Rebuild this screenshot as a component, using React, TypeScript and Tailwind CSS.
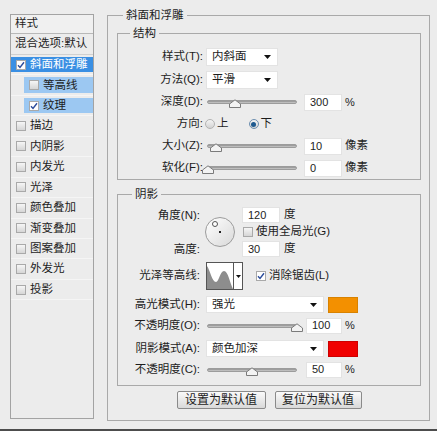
import React from 'react';

type Effect = { name: string; checked?: boolean; selected?: boolean; sub?: boolean };

const effects: Effect[] = [
  { name: '斜面和浮雕', checked: true, selected: true },
  { name: '等高线', sub: true },
  { name: '纹理', sub: true, checked: true },
  { name: '描边' },
  { name: '内阴影' },
  { name: '内发光' },
  { name: '光泽' },
  { name: '颜色叠加' },
  { name: '渐变叠加' },
  { name: '图案叠加' },
  { name: '外发光' },
  { name: '投影' },
];

const Check = ({ checked, white }: { checked?: boolean; white?: boolean }) => (
  <span
    className={`w-[10px] h-[10px] shrink-0 border border-[#a9a9a9] flex items-center justify-center ${
      white ? 'bg-white' : 'bg-gradient-to-b from-[#f6f6f6] to-[#d6d6d6]'
    }`}
  >
    {checked && (
      <svg width="8" height="8" viewBox="0 0 8 8">
        <path d="M1 4.2 L3 6.4 L7 1.2" stroke="#2b4c9b" strokeWidth="1.4" fill="none" />
      </svg>
    )}
  </span>
);

const Radio = ({ on }: { on?: boolean }) => (
  <span
    className={`w-[10px] h-[10px] rounded-full border flex items-center justify-center bg-gradient-to-b from-[#f4f4f4] to-[#d3d3d3] ${
      on ? 'border-[#6d8fb0]' : 'border-[#b3b3b3]'
    }`}
  >
    {on && <span className="w-[5px] h-[5px] rounded-full bg-[#1d5a90]" />}
  </span>
);

const Arrow = () => (
  <svg width="7" height="4" viewBox="0 0 7 4">
    <path d="M0 0 H7 L3.5 4 Z" fill="#111" />
  </svg>
);

// thumb position comes from the value fraction
const Slider = ({ pos }: { pos: number }) => (
  <div className="relative w-[90px] h-[16px] shrink-0">
    <div className="absolute left-0 right-0 top-[6px] h-[4px] rounded-full border border-[#9c9c9c] bg-gradient-to-b from-[#8f8f8f] to-[#cdcdcd]" />
    <svg className="absolute top-[5px]" style={{ left: pos * 90 - 6 }} width="12" height="9" viewBox="0 0 12 9">
      <path d="M0.5 8.5 V5 L6 0.8 L11.5 5 V8.5 Z" fill="#f3f3f3" stroke="#7b7b7b" />
    </svg>
  </div>
);

const Field = ({ value, className = '' }: { value: string; className?: string }) => (
  <div className={`bg-white border border-[#e3e3e3] flex items-center pl-[5px] text-[11px] ${className}`}>{value}</div>
);

const Select = ({ value, className = '' }: { value: string; className?: string }) => (
  <div className={`bg-white border border-[#e3e3e3] flex items-center justify-between pl-[5px] pr-[6px] ${className}`}>
    <span>{value}</span>
    <Arrow />
  </div>
);

const App: React.FC = () => {
  return (
    <div className="w-[437px] h-[431px] bg-[#ececec] text-[#1d1d1d] text-[11.5px] font-['Liberation_Sans','Noto_Sans_CJK_SC',sans-serif] flex flex-col">
      <div className="h-[429px] flex items-start pl-[10px]">
        {/* left list */}
        <div className="mt-[14px] w-[84px] h-[405px] border border-[#a3a3a3] flex flex-col">
          <div className="h-[19px] flex items-center pl-[4px] border-b border-[#b8b8b8] bg-[#f0f0f0]">样式</div>
          <div className="h-[21px] flex items-center pl-[4px] border-b border-[#d0d0d0]">混合选项:默认</div>
          {effects.map((e) => (
            <div key={e.name} className={`h-[20.45px] py-[2px] border-b border-[#f5f5f5] ${e.sub ? 'pl-[13px]' : ''}`}>
              <div
                className={`h-full flex items-center gap-[4px] pl-[5px] ${
                  e.selected ? 'bg-[#3a8fe3] text-white' : e.sub ? 'bg-[#9cc8f2]' : ''
                }`}
              >
                <Check checked={e.checked} white={e.selected || (e.sub && e.checked)} />
                <span>{e.name}</span>
              </div>
            </div>
          ))}
        </div>

        {/* right settings */}
        <fieldset className="mt-[9px] ml-[13px] w-[323px] h-[412px] border border-[#a9a9a9] p-0">
          <legend className="ml-[15px] px-[3px] leading-[12px] text-[11.5px]">斜面和浮雕</legend>
          <div className="pl-[9px] pr-[8px] pt-[6px] flex flex-col">
            <fieldset className="border border-[#a9a9a9] p-0">
              <legend className="ml-[12px] px-[3px] leading-[12px]">结构</legend>
              <div className="pt-[9px] pb-[2px] flex flex-col">
                <div className="h-[18px] flex items-center">
                  <span className="w-[85px] text-right">样式(T):</span>
                  <Select value="内斜面" className="ml-[3px] w-[72px] h-[18px]" />
                </div>
                <div className="mt-[5px] h-[18px] flex items-center">
                  <span className="w-[85px] text-right">方法(Q):</span>
                  <Select value="平滑" className="ml-[3px] w-[72px] h-[18px]" />
                </div>
                <div className="mt-[4px] h-[18px] flex items-center">
                  <span className="w-[85px] text-right">深度(D):</span>
                  <div className="ml-[4px]"><Slider pos={0.31} /></div>
                  <Field value="300" className="ml-[7px] w-[38px] h-[17px]" />
                  <span className="ml-[3px] text-[11px]">%</span>
                </div>
                <div className="mt-[4px] h-[18px] flex items-center">
                  <span className="w-[85px] text-right">方向:</span>
                  <span className="ml-[2px]"><Radio /></span>
                  <span className="ml-[2px]">上</span>
                  <span className="ml-[20px]"><Radio on /></span>
                  <span className="ml-[2px]">下</span>
                </div>
                <div className="mt-[4px] h-[18px] flex items-center">
                  <span className="w-[85px] text-right">大小(Z):</span>
                  <div className="ml-[4px]"><Slider pos={0.1} /></div>
                  <Field value="10" className="ml-[7px] w-[38px] h-[17px]" />
                  <span className="ml-[3px]">像素</span>
                </div>
                <div className="mt-[4px] h-[18px] flex items-center">
                  <span className="w-[85px] text-right">软化(F):</span>
                  <div className="ml-[4px]"><Slider pos={0.01} /></div>
                  <Field value="0" className="ml-[7px] w-[38px] h-[17px]" />
                  <span className="ml-[3px]">像素</span>
                </div>
              </div>
            </fieldset>

            <fieldset className="mt-[8px] border border-[#a9a9a9] p-0">
              <legend className="ml-[14px] px-[3px] leading-[12px]">阴影</legend>
              <div className="pt-[7px] pb-[7px] flex flex-col">
                <div className="h-[50px] flex">
                  <div className="w-[82px] flex flex-col gap-[1px] text-right">
                    <span className="h-[16px] leading-[16px]">角度(N):</span>
                    <span className="h-[16px]" />
                    <span className="h-[16px] leading-[16px]">高度:</span>
                  </div>
                  <div className="ml-[5px] mt-[10px] w-[30px] h-[30px] rounded-full border border-[#9c9c9c] bg-gradient-to-br from-white to-[#d9d9d9] relative">
                    <span className="absolute left-[13px] top-[13px] w-[2px] h-[2px] bg-[#222]" />
                    <span className="absolute left-[6px] top-[3px] w-[6px] h-[6px] rounded-full border border-[#555] bg-white" />
                  </div>
                  <div className="ml-[7px] flex flex-col gap-[1px]">
                    <div className="h-[16px] flex items-center">
                      <Field value="120" className="w-[38px] h-[16px]" />
                      <span className="ml-[4px]">度</span>
                    </div>
                    <div className="h-[16px] flex items-center pl-[1px]">
                      <Check />
                      <span className="ml-[3px]">使用全局光(G)</span>
                    </div>
                    <div className="h-[16px] flex items-center">
                      <Field value="30" className="w-[38px] h-[16px]" />
                      <span className="ml-[4px]">度</span>
                    </div>
                  </div>
                </div>

                <div className="mt-[5px] h-[28px] flex items-center">
                  <span className="w-[82px] text-right">光泽等高线:</span>
                  <div className="ml-[6px] w-[37px] h-[28px] border border-[#555] bg-white flex">
                    <svg className="w-[26px] h-full" viewBox="0 0 26 26" preserveAspectRatio="none">
                      <path d="M0 3 C3 7 5 19 9 19 C12 19 13 8 17 8 C21 8 23 20 26 26 L0 26 Z" fill="#8d8d8d" />
                    </svg>
                    <div className="flex-1 border-l border-[#555] flex items-center justify-center">
                      <svg width="5" height="3" viewBox="0 0 5 3"><path d="M0 0 H5 L2.5 3 Z" fill="#111" /></svg>
                    </div>
                  </div>
                  <span className="ml-[13px]"><Check checked white /></span>
                  <span className="ml-[3px]">消除锯齿(L)</span>
                </div>

                <div className="mt-[6px] h-[17px] flex items-center">
                  <span className="w-[82px] text-right">高光模式(H):</span>
                  <Select value="强光" className="ml-[6px] w-[118px] h-[17px]" />
                  <div className="ml-[4px] w-[30px] h-[16px] bg-[#f39000] border border-[#d88200]" />
                </div>
                <div className="mt-[4px] h-[17px] flex items-center">
                  <span className="w-[82px] text-right">不透明度(O):</span>
                  <div className="ml-[7px]"><Slider pos={1} /></div>
                  <Field value="100" className="ml-[9px] w-[36px] h-[16px]" />
                  <span className="ml-[3px] text-[11px]">%</span>
                </div>
                <div className="mt-[6px] h-[17px] flex items-center">
                  <span className="w-[82px] text-right">阴影模式(A):</span>
                  <Select value="颜色加深" className="ml-[6px] w-[118px] h-[17px]" />
                  <div className="ml-[4px] w-[30px] h-[16px] bg-[#f00000] border border-[#cc0000]" />
                </div>
                <div className="mt-[4px] h-[17px] flex items-center">
                  <span className="w-[82px] text-right">不透明度(C):</span>
                  <div className="ml-[7px]"><Slider pos={0.5} /></div>
                  <Field value="50" className="ml-[9px] w-[36px] h-[16px]" />
                  <span className="ml-[3px] text-[11px]">%</span>
                </div>
              </div>
            </fieldset>

            <div className="mt-[5px] flex justify-center gap-[9px]">
              <button className="w-[89px] h-[18px] border border-[#8a8a8a] rounded-[2px] bg-gradient-to-b from-[#fafafa] to-[#d9d9d9] text-[12px] leading-none">
                设置为默认值
              </button>
              <button className="w-[87px] h-[18px] border border-[#8a8a8a] rounded-[2px] bg-gradient-to-b from-[#fafafa] to-[#d9d9d9] text-[12px] leading-none">
                复位为默认值
              </button>
            </div>
          </div>
        </fieldset>
      </div>
      <div className="h-[2px] bg-[#4d4d4d]" />
    </div>
  );
};

export default App;
